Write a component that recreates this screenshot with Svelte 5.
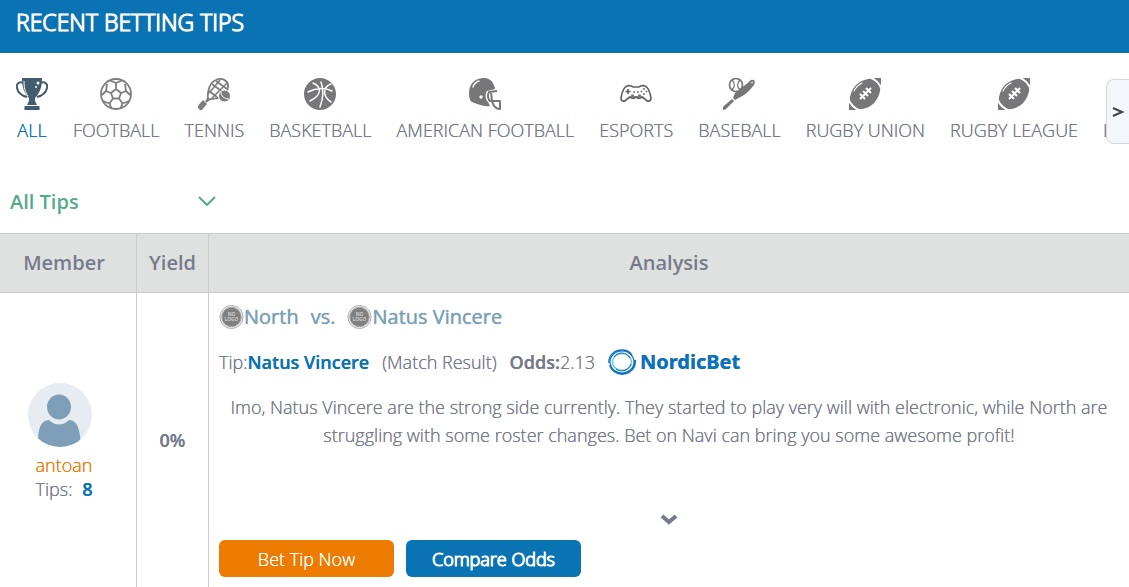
<script>
  const sports = [
    { id: 'all', name: 'ALL' },
    { id: 'football', name: 'FOOTBALL' },
    { id: 'tennis', name: 'TENNIS' },
    { id: 'basketball', name: 'BASKETBALL' },
    { id: 'american', name: 'AMERICAN FOOTBALL' },
    { id: 'esports', name: 'ESPORTS' },
    { id: 'baseball', name: 'BASEBALL' },
    { id: 'rugby', name: 'RUGBY UNION' },
    { id: 'rugby', name: 'RUGBY LEAGUE' },
    { id: 'hockey', name: 'ICE HOCKEY' }
  ];

  const tips = [
    {
      member: 'antoan',
      count: 8,
      yieldPct: 0,
      home: 'North',
      away: 'Natus Vincere',
      pick: 'Natus Vincere',
      market: 'Match Result',
      odds: '2.13',
      text: 'Imo, Natus Vincere are the strong side currently. They started to play very will with electronic, while North are struggling with some roster changes. Bet on Navi can bring you some awesome profit!'
    }
  ];

  let active = $state('ALL');
  let filter = $state('all');
  let strip;

  function scrollStrip() {
    strip.scrollBy({ left: 200, behavior: 'smooth' });
  }
</script>

{#snippet sportIcon(id)}
  <svg class="sport-icon" viewBox="0 0 32 32" aria-hidden="true">
    {#if id === 'all'}
      <g fill="none" stroke="#435d6e" stroke-width="2">
        <path d="M8 5C3 3 0 6 1 10c1 5 6 8 10 9M24 5c5-2 8 1 7 5-1 5-6 8-10 9" />
      </g>
      <path fill="#435d6e" d="M6 0h20c0 9-2 15-7 20v3l2 4h-10l2-4v-3C8 15 6 9 6 0zM8.500 28h15v4h-15z" />
      <path fill="none" stroke="#fff" d="M8 3c0 7 1 11 4 15" />
      <circle cx="22" cy="5" r="1.500" fill="#fff" />
      <circle cx="20" cy="9" r="1" fill="#fff" />
    {:else if id === 'football'}
      <g fill="none" stroke="#7d7d7d" stroke-width="1.800" stroke-linejoin="round">
        <circle cx="16" cy="16" r="15" />
        <path d="M16 11l5 4-2 5.500h-6L11 15zM16 11V5M21 15l5-2M19 20.500l3.500 5M13 20.500l-3.500 5M11 15l-5-2" />
        <path d="M10 2.500L16 5l6-2.500M2 17l4-4 1-7M30 17l-4-4-1-7M3 23l6.500 2.500 2 5M29 23l-6.500 2.500-2 5" />
      </g>
    {:else if id === 'tennis'}
      <g fill="none" stroke="#7d7d7d" stroke-width="1.800">
        <path d="M10 21C9 13 12 4 18 2c6-3 13 1 12 7-1 8-10 13-20 12z" />
        <path stroke-width="1.600" d="M14 6l12 9M18 3l11 8M11 13l8 6M22 2L11 15M29 5L14 20" />
        <path d="M10 20l-2 4M12 21l-4 3" />
      </g>
      <path fill="#7d7d7d" d="M5 22l4 4-6 7-4-4z" />
      <circle cx="26.500" cy="18" r="6" fill="#7d7d7d" stroke="#fff" stroke-width="1" />
      <path fill="none" stroke="#fff" stroke-width="1" d="M23 14c0 4 3 7 8 7" />
    {:else if id === 'basketball'}
      <circle cx="16" cy="16" r="16" fill="#777678" />
      <g fill="none" stroke="#fff" stroke-width="1.500" stroke-linecap="round">
        <path d="M4 14c8-4 16-5 24-1M17 4c3 8 2 17-1 25M9 5c9 4 9 12-3 18M27 6c-9 3-8 13 0 18" />
      </g>
    {:else if id === 'american'}
      <path fill="#777678" d="M0 15C0 5 7 0 15 0c7 0 10 5 11 11l-8 2c-2 3-2 8 1 11l2 4c-7 1-12-2-18-4-2-1-3-4-3-9z" />
      <path fill="none" stroke="#fff" stroke-width="1.500" stroke-linecap="round" d="M4 9c1-3 3-5 6-6" />
      <circle cx="12" cy="19" r="1.700" fill="#fff" />
      <path fill="none" stroke="#777678" stroke-width="2" stroke-linejoin="round" d="M28 13l-8 1c-2 3-1 7 1 9h10v8c-5 0-7-4-8-8l-1-9" />
    {:else if id === 'esports'}
      <g fill="none" stroke="#5f5f61" stroke-width="1.600" stroke-linejoin="round">
        <path d="M7 8c2-1 5 0 6 1h6c1-1 4-2 6-1 3 1 5 6 6 12 0 4-4 4-6 1l-3-2c-2 2-5 2-5 0h-2c0 2-3 2-5 0l-3 2c-2 3-6 3-6-1C2 14 4 9 7 8z" />
        <path d="M8 11v5M5.500 13.500h5M13.500 14h1.500M17 14h1.500" />
        <path stroke-width="1" d="M9 19h14" />
      </g>
      <g fill="#777">
        <circle cx="24" cy="11" r="1" /><circle cx="24" cy="16" r="1" />
        <circle cx="21.500" cy="13.500" r="1" /><circle cx="26.500" cy="13.500" r="1" />
        <circle cx="12.500" cy="18" r="1.700" /><circle cx="19.500" cy="18" r="1.700" />
      </g>
    {:else if id === 'baseball'}
      <path fill="#777678" d="M28 2c3-1 5 1 3 5-3 4-6 7-10 10l-7 4-2 1-2-2 2-5c3-3 11-8 16-13z" />
      <path fill="#777678" d="M9 21l2 2-7 7c-1 1-2 2-4 2v-3l2-2z" />
      <path fill="none" stroke="#fff" d="M28 5l2-1" />
      <g fill="#fff" stroke="#777678" stroke-width="1.700">
        <circle cx="13" cy="7" r="6.500" />
        <path fill="none" stroke-width="1.400" d="M9 2c3 3 3 7 0 10M17 2c-3 3-3 7 0 10" />
      </g>
    {:else if id === 'rugby'}
      <path fill="#777678" d="M19 1c4-1 9 0 11 1 2 2 2 7 1 11-2 10-9 17-18 18-4 1-9 0-11-1-2-2-2-7-1-11C3 9 9 3 19 1z" />
      <path fill="#777678" d="M24 0h8v8zM0 24v8h8z" />
      <g fill="none" stroke="#fff">
        <path stroke-width="2" d="M20-1c6 2 11 7 13 13M-1 20c2 6 7 11 13 13" />
        <path stroke-width="1.200" stroke-linecap="round" d="M5 13c2-4 4-6 8-8" />
        <path stroke-width="2" d="M11 21l11-11M11 16l5 5M14 13l5 5M17 10l5 5" />
      </g>
    {/if}
  </svg>
{/snippet}

{#snippet noLogo()}
  <svg class="no-logo" viewBox="0 0 26 26" aria-hidden="true">
    <circle cx="13" cy="13" r="12" fill="#eee" stroke="#aaa" />
    <circle cx="13" cy="13" r="10" fill="#808080" stroke="#999" />
    <g fill="#ccc" font-family="Open Sans, sans-serif" font-size="5" font-weight="700" text-anchor="middle">
      <text x="13" y="12">NO</text>
      <text x="13" y="17">LOGO</text>
    </g>
  </svg>
{/snippet}

<section class="tips">
  <header class="title-bar">
    <h1>RECENT BETTING TIPS</h1>
  </header>

  <div class="sports">
    <nav class="strip" bind:this={strip} aria-label="Sports">
      {#each sports as sport}
        <a href="#{sport.id}" class:active={active === sport.name} onclick={() => (active = sport.name)}>
          {@render sportIcon(sport.id)}
          <span>{sport.name}</span>
        </a>
      {/each}
    </nav>
    <button class="next" aria-label="More sports" onclick={scrollStrip}>
      <svg viewBox="0 0 12 12" aria-hidden="true"><path d="M1 2l9 4-9 4" /></svg>
    </button>
  </div>

  <div class="filter">
    <select aria-label="Tips filter" bind:value={filter}>
      <option value="all">All Tips</option>
      <option value="pending">Pending Tips</option>
      <option value="settled">Settled Tips</option>
    </select>
    <svg viewBox="0 0 18 10" aria-hidden="true"><path d="M1 1l8 8 8-8" /></svg>
  </div>

  <table>
    <thead>
      <tr>
        <th class="member">Member</th>
        <th class="yield">Yield</th>
        <th>Analysis</th>
      </tr>
    </thead>
    <tbody>
      {#each tips as tip}
        <tr>
          <td class="member">
            <svg class="avatar" viewBox="0 0 64 64" aria-hidden="true">
              <clipPath id="face"><circle cx="32" cy="32" r="32" /></clipPath>
              <g clip-path="url(#face)">
                <rect width="64" height="64" fill="#e7ecf3" />
                <ellipse cx="31" cy="24" rx="12" ry="12.500" fill="#7e9fb7" />
                <path fill="#7e9fb7" d="M10 64c0-16 1-26 11-27 6 6 14 6 20 0 10 1 11 11 12 27z" />
              </g>
            </svg>
            <a class="name" href="#{tip.member}">{tip.member}</a>
            <div>Tips: <b>{tip.count}</b></div>
          </td>
          <td class="yield">{tip.yieldPct}%</td>
          <td class="analysis">
            <div class="match">
              {@render noLogo()}<span>{tip.home}</span>
              <span class="vs">vs.</span>
              {@render noLogo()}<span>{tip.away}</span>
            </div>
            <div class="pick">
              <span>Tip:<b class="selection">{tip.pick}</b></span>
              <span>({tip.market})</span>
              <span><b>Odds:</b>{tip.odds}</span>
              <a class="bookie" href="#nordicbet">
                <svg viewBox="0 0 28 26" aria-hidden="true">
                  <g fill="none" stroke="#0d72bd">
                    <ellipse cx="14" cy="13" rx="12" ry="11" stroke-width="1.200" />
                    <path stroke-width="1.800" d="M27 11c1 8-5 14-13 14C8 25 3 21 2 16" />
                    <path stroke-width="1.300" d="M1 14C0 7 6 1 14 1c4 0 8 2 10 5" />
                    <ellipse cx="14" cy="13" rx="9.500" ry="8.500" stroke="#6cc3ec" stroke-width="1.500" />
                    <path stroke-width="1" d="M6 8c4-6 13-5 16 1M23 15c-2 6-9 9-15 5" />
                  </g>
                </svg>
                <span>NordicBet</span>
              </a>
            </div>
            <p>{tip.text}</p>
            <button class="more" aria-label="Show full analysis">
              <svg viewBox="0 0 18 12" aria-hidden="true"><path d="M2 3l7 6 7-6" /></svg>
            </button>
            <div class="actions">
              <button class="bet">Bet Tip Now</button>
              <button class="compare">Compare Odds</button>
            </div>
          </td>
        </tr>
      {/each}
    </tbody>
  </table>
</section>

<style>
  :global(body) { background: #fff; overflow: hidden; }
  /* the light cut is thin at this size, the shadow thickens its strokes */
  .tips { font-family: "Open Sans", sans-serif; font-size: 18px; font-weight: 300; line-height: 24px; color: #767b8b; text-shadow: 0 0 0 currentColor; }
  a { color: inherit; text-decoration: none; }
  b { font-weight: 600; }
  button { font: inherit; border: 0; padding: 0; cursor: pointer; text-shadow: inherit; }
  svg { display: block; fill: none; }

  .title-bar { background: #0a73b3; color: #fff; padding: 6px 16px 15px; }
  h1 { margin: 0; font-size: 23px; line-height: 32px; font-weight: 300; -webkit-text-stroke: 1px; text-shadow: 0 0 1px #fff; }

  .sports { position: relative; }
  .strip { display: flex; gap: 25px; padding: 25px 16px 0; overflow: hidden; }
  .strip a { display: flex; flex-direction: column; align-items: center; flex-shrink: 0; gap: 8px; white-space: nowrap; }
  .strip a.active { color: #0a73b3; }
  .sport-icon { width: 32px; height: 32px; }
  .next { position: absolute; top: 26px; right: 0; width: 23px; height: 65px; background: #f3f7fb; border: 1px solid #d5d8dc; border-right: 0; border-radius: 8px 0 0 8px; }
  .next svg { width: 12px; height: 12px; margin: 0 auto; stroke: #444; stroke-width: 2; }

  .filter { position: relative; width: 216px; margin-top: 44px; padding: 0 0 15px 10px; }
  .filter select { appearance: none; width: 100%; height: 32px; padding: 0; border: 0; background: none; color: #55ab88; font: 600 20px/32px "Open Sans", sans-serif; }
  .filter svg { position: absolute; top: 10px; right: 10px; width: 18px; height: 10px; stroke: #55ab88; stroke-width: 2; pointer-events: none; }

  table { width: 100%; border-collapse: collapse; table-layout: fixed; }
  th { height: 58px; padding: 0; background: #dfe1e1; border: 1px solid #cbcbcb; font-size: 20px; font-weight: 600; text-shadow: none; }
  td { padding: 0; border: 1px solid #cbcbcb; text-align: center; }
  th:first-child, td:first-child { border-left: 0; }
  th:last-child, td:last-child { border-right: 0; }
  .member { width: 128px; padding-right: 8px; }
  .yield { width: 71px; }
  td.yield { font-weight: 600; }

  .avatar { width: 64px; height: 64px; margin: 4px auto 6px 28px; }
  .name { color: #ee7a00; }
  .member b { margin-left: 5px; color: #0a73b3; }

  .analysis { padding: 10px; }
  .match { display: flex; align-items: center; height: 28px; color: #7c9fb5; font-size: 20px; font-weight: 400; text-shadow: 0 0 1px #7c9fb5; }
  .vs { margin: 0 12px; }
  .no-logo { width: 25px; height: 26px; text-shadow: none; }
  .pick { display: flex; align-items: center; gap: 13px; height: 28px; margin-top: 17px; }
  .selection { color: #0a73b3; }
  .bookie { display: flex; align-items: center; gap: 4px; color: #0d72bd; font: 700 20px/26px "Noto Sans", sans-serif; }
  .bookie svg { width: 28px; height: 26px; }
  p { height: 84px; margin: 17px 0 0; line-height: 28px; overflow: hidden; }
  .more { display: block; width: 18px; height: 12px; margin: 36px auto 15px; background: none; }
  .more svg { width: 18px; height: 12px; stroke: #767b8b; stroke-width: 4; }
  .actions { display: flex; gap: 12px; }
  .actions button { width: 175px; height: 37px; border-radius: 6px; color: #fff; }
  .bet { background: #ed7b00; }
  .compare { background: #0a73b3; -webkit-text-stroke: 1px; }
</style>
